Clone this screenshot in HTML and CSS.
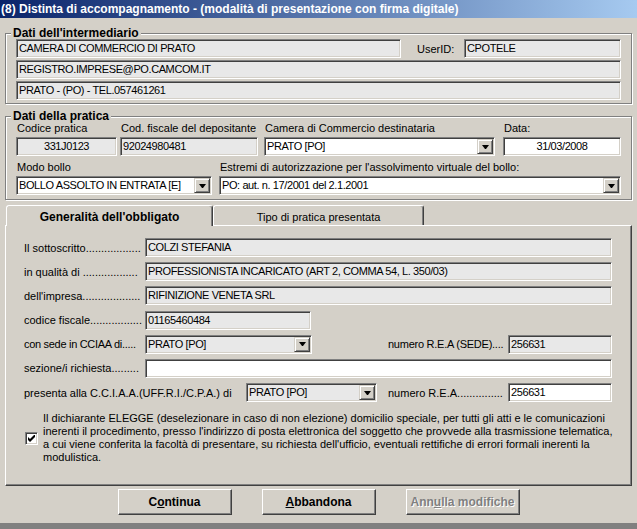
FILE: index.html
```html
<!DOCTYPE html>
<html lang="it">
<head>
<meta charset="utf-8">
<title>Distinta di accompagnamento</title>
<link rel="stylesheet" href="styles.css">
</head>
<body>
<div class="window">
  <div class="titlebar">(8) Distinta di accompagnamento - (modalità di presentazione con firma digitale)</div>
  <div class="client">

    <div class="group group-1">
      <div class="group-title">Dati dell'intermediario</div>
      <div class="group-body stack">
        <div class="line">
          <div class="field ro w-camera">CAMERA DI COMMERCIO DI PRATO</div>
          <span class="userid-label">UserID:</span>
          <div class="field ro grow">CPOTELE</div>
        </div>
        <div class="field ro">REGISTRO.IMPRESE@PO.CAMCOM.IT</div>
        <div class="field ro">PRATO - (PO) - TEL.057461261</div>
      </div>
    </div>

    <div class="group group-2">
      <div class="group-title">Dati della pratica</div>
      <div class="group-body">
        <div class="line top-row">
          <div class="fcol w-codice">
            <span class="flabel">Codice pratica</span>
            <div class="field ro center">331J0123</div>
          </div>
          <div class="fcol w-cf">
            <span class="flabel">Cod. fiscale del depositante</span>
            <div class="field ro">92024980481</div>
          </div>
          <div class="fcol w-camera2">
            <span class="flabel">Camera di Commercio destinataria</span>
            <div class="field combo">PRATO [PO]<span class="arrow"></span></div>
          </div>
          <div class="fcol w-data">
            <span class="flabel">Data:</span>
            <div class="field center">31/03/2008</div>
          </div>
        </div>
        <div class="line bottom-row">
          <div class="fcol w-bollo">
            <span class="flabel">Modo bollo</span>
            <div class="field combo">BOLLO ASSOLTO IN ENTRATA [E]<span class="arrow"></span></div>
          </div>
          <div class="fcol grow w-estremi">
            <span class="flabel">Estremi di autorizzazione per l'assolvimento virtuale del bollo:</span>
            <div class="field combo">PO: aut. n. 17/2001 del 2.1.2001<span class="arrow"></span></div>
          </div>
        </div>
      </div>
    </div>

    <div class="tabs">
      <div class="tab active">Generalità dell'obbligato</div>
      <div class="tab inactive">Tipo di pratica presentata</div>
    </div>

    <div class="panel">
      <div class="frow">
        <span class="lbl">Il sottoscritto..................</span>
        <div class="field ro grow">COLZI STEFANIA</div>
      </div>
      <div class="frow">
        <span class="lbl">in qualità di ..................</span>
        <div class="field ro grow">PROFESSIONISTA INCARICATO (ART 2, COMMA 54, L. 350/03)</div>
      </div>
      <div class="frow">
        <span class="lbl">dell'impresa...................</span>
        <div class="field ro grow">RIFINIZIONE VENETA SRL</div>
      </div>
      <div class="frow">
        <span class="lbl">codice fiscale.................</span>
        <div class="field ro w-cfisc">01165460484</div>
      </div>
      <div class="frow">
        <span class="lbl tight">con sede in CCIAA di.....</span>
        <div class="field ro combo w-sede">PRATO [PO]<span class="arrow"></span></div>
        <span class="lbl2 gap-sede tight2">numero R.E.A (SEDE)....</span>
        <div class="field ro grow">256631</div>
      </div>
      <div class="frow">
        <span class="lbl">sezione/i richiesta.........</span>
        <div class="field grow"></div>
      </div>
      <div class="frow">
        <span class="lbl lbl-presenta">presenta alla C.C.I.A.A.(UFF.R.I./C.P.A.) di</span>
        <div class="field ro combo w-presenta">PRATO [PO]<span class="arrow"></span></div>
        <span class="lbl2 gap-presenta">numero R.E.A...............</span>
        <div class="field grow">256631</div>
      </div>
      <div class="elegge">
        <span class="check"><svg width="7" height="7" viewBox="0 0 7 7"><path d="M0 2L2 4L7 -1V2L2 7L0 5Z" fill="#000"/></svg></span>
        <p class="elegge-text">Il dichiarante ELEGGE (deselezionare in caso di non elezione) domicilio speciale, per tutti gli atti e le comunicazioni<br>inerenti il procedimento, presso l'indirizzo di posta elettronica del soggetto che provvede alla trasmissione telematica,<br>a cui viene conferita la facoltà di presentare, su richiesta dell'ufficio, eventuali rettifiche di errori formali inerenti la<br>modulistica.</p>
      </div>
    </div>

    <div class="buttons">
      <button type="button" class="btn">C<u>o</u>ntinua</button>
      <button type="button" class="btn"><u>A</u>bbandona</button>
      <button type="button" class="btn disabled">Ann<u>u</u>lla modifiche</button>
    </div>
  </div>
  <div class="frame-bottom"></div>
</div>
</body>
</html>
```

FILE: styles.css
```css
* { box-sizing: border-box; }
html, body { margin: 0; padding: 0; }
body {
  background: #d4d0c8;
  font-family: "Liberation Sans", Arial, sans-serif;
  font-size: 11px;
  color: #000;
}
.window {
  width: 637px;
  height: 529px;
  display: flex;
  flex-direction: column;
  overflow: hidden;
}
.titlebar {
  height: 18px;
  line-height: 19px;
  padding-left: 1px;
  color: #fff;
  font-weight: bold;
  font-size: 12px;
  white-space: nowrap;
  background: linear-gradient(to right, #0a246a, #a6caf0);
}
.client {
  padding: 0 5px;
  display: flex;
  flex-direction: column;
}

/* group boxes (etched) */
.group {
  border: 1px solid #808080;
  box-shadow: inset 1px 1px #fff, 1px 1px #fff;
  padding: 0 10px;
}
.group-title {
  width: fit-content;
  margin: -7px 0 0 -5px;
  padding: 0 2px;
  font-size: 12px;
  font-weight: bold;
  line-height: 12px;
  background: #d4d0c8;
}
.group-1 { margin-top: 15px; padding-bottom: 3px; }
.group-2 { margin-top: 12px; padding-bottom: 4px; }

.stack { display: flex; flex-direction: column; gap: 2px; }
.line { display: flex; align-items: flex-end; }
.grow { flex: 1; }

/* sunken edit fields */
.field {
  height: 19px;
  border: 1px solid;
  border-color: #808080 #fff #fff #808080;
  box-shadow: inset 1px 1px #404040, inset -1px -1px #d4d0c8;
  background: #fff;
  padding: 0 2px;
  display: flex;
  align-items: center;
  white-space: nowrap;
  overflow: hidden;
  letter-spacing: -0.4px;
  line-height: 15px;
  flex: none;
}
.field.grow { flex: 1; }
.field.ro { background: #e8e8e8; }
.field.center { justify-content: center; }
.combo { padding: 1px 1px 1px 2px; }
.arrow {
  margin-left: auto;
  width: 16px;
  height: 15px;
  flex: none;
  background: #d4d0c8;
  border: 1px solid;
  border-color: #d4d0c8 #404040 #404040 #d4d0c8;
  box-shadow: inset 1px 1px #fff, inset -1px -1px #808080;
  display: flex;
  align-items: center;
  justify-content: center;
}
.arrow::after {
  content: "";
  box-sizing: content-box;
  width: 1px;
  height: 0;
  border-top: 4px solid #000;
  border-left: 3px solid transparent;
  border-right: 3px solid transparent;
}

/* intermediario */
.w-camera { width: 385px; }
.userid-label { width: 63px; padding-left: 16px; align-self: center; }

/* pratica */
.fcol { display: flex; flex-direction: column; }
.flabel { line-height: 12px; padding-left: 1px; margin-bottom: 3px; white-space: nowrap; }
.bottom-row { margin-top: 5px; }
.w-codice { width: 101px; }
.w-cf { width: 138px; margin-left: 3px; }
.w-camera2 { width: 231px; margin-left: 6px; }
.w-data { width: 118px; margin-left: 8px; }
.w-bollo { width: 196px; }
.w-estremi { margin-left: 7px; }

/* tabs */
.tabs {
  display: flex;
  align-items: flex-end;
  height: 20px;
  margin-top: 5px;
  padding-left: 1px;
  position: relative;
  z-index: 1;
}
.tab {
  height: 20px;
  border: 1px solid;
  border-bottom: 0;
  border-color: #fff #404040 transparent #fff;
  border-radius: 3px 3px 0 0;
  box-shadow: inset -1px 0 #808080;
  background: #d4d0c8;
  display: flex;
  align-items: center;
  justify-content: center;
  padding-top: 2px;
  white-space: nowrap;
}
.tab.active {
  width: 207px;
  height: 21px;
  margin-bottom: -1px;
  padding-top: 1px;
  font-size: 12px;
  font-weight: bold;
}
.tab.inactive { width: 211px; }

.panel {
  height: 261px;
  border: 1px solid;
  border-color: #fff #404040 #404040 #fff;
  box-shadow: inset -1px -1px #808080;
  padding: 12px 19px 0 18px;
  display: flex;
  flex-direction: column;
  gap: 5.2px;
}
.frow { display: flex; align-items: center; height: 19px; }
.lbl { width: 121px; flex: none; white-space: nowrap; }
.lbl-presenta { width: 222px; }
.lbl2 { width: 120px; flex: none; white-space: nowrap; }
.tight { letter-spacing: -0.3px; }
.tight2 { letter-spacing: -0.25px; }
.gap-sede { margin-left: 76px; }
.gap-presenta { margin-left: 11px; }
.w-cfisc { width: 166px; }
.w-sede { width: 167px; }
.w-presenta { width: 131px; }

.elegge {
  display: flex;
  align-items: center;
  margin-top: 5px;
}
.check {
  width: 13px;
  height: 13px;
  flex: none;
  margin-left: 1px;
  border: 1px solid;
  border-color: #808080 #fff #fff #808080;
  box-shadow: inset 1px 1px #404040, inset -1px -1px #d4d0c8;
  background: #fff;
  display: flex;
  align-items: center;
  justify-content: center;
}
.check svg { display: block; }
.elegge-text {
  margin: 0 0 0 5px;
  line-height: 13px;
  white-space: nowrap;
}

/* buttons */
.buttons {
  display: flex;
  justify-content: center;
  gap: 30px;
  margin-top: 3px;
}
.btn {
  width: 114px;
  height: 26px;
  margin: 0;
  padding: 0;
  border: 1px solid;
  border-color: #fff #404040 #404040 #fff;
  border-radius: 0;
  box-shadow: inset -1px -1px #808080;
  background: #d4d0c8;
  color: #000;
  font-family: "Liberation Sans", Arial, sans-serif;
  font-size: 12px;
  font-weight: bold;
  display: flex;
  align-items: center;
  justify-content: center;
}
.btn.disabled {
  color: #808080;
  text-shadow: 1px 1px #fff;
}
.frame-bottom {
  margin-top: auto;
  height: 6px;
  background: #808080;
}
```
